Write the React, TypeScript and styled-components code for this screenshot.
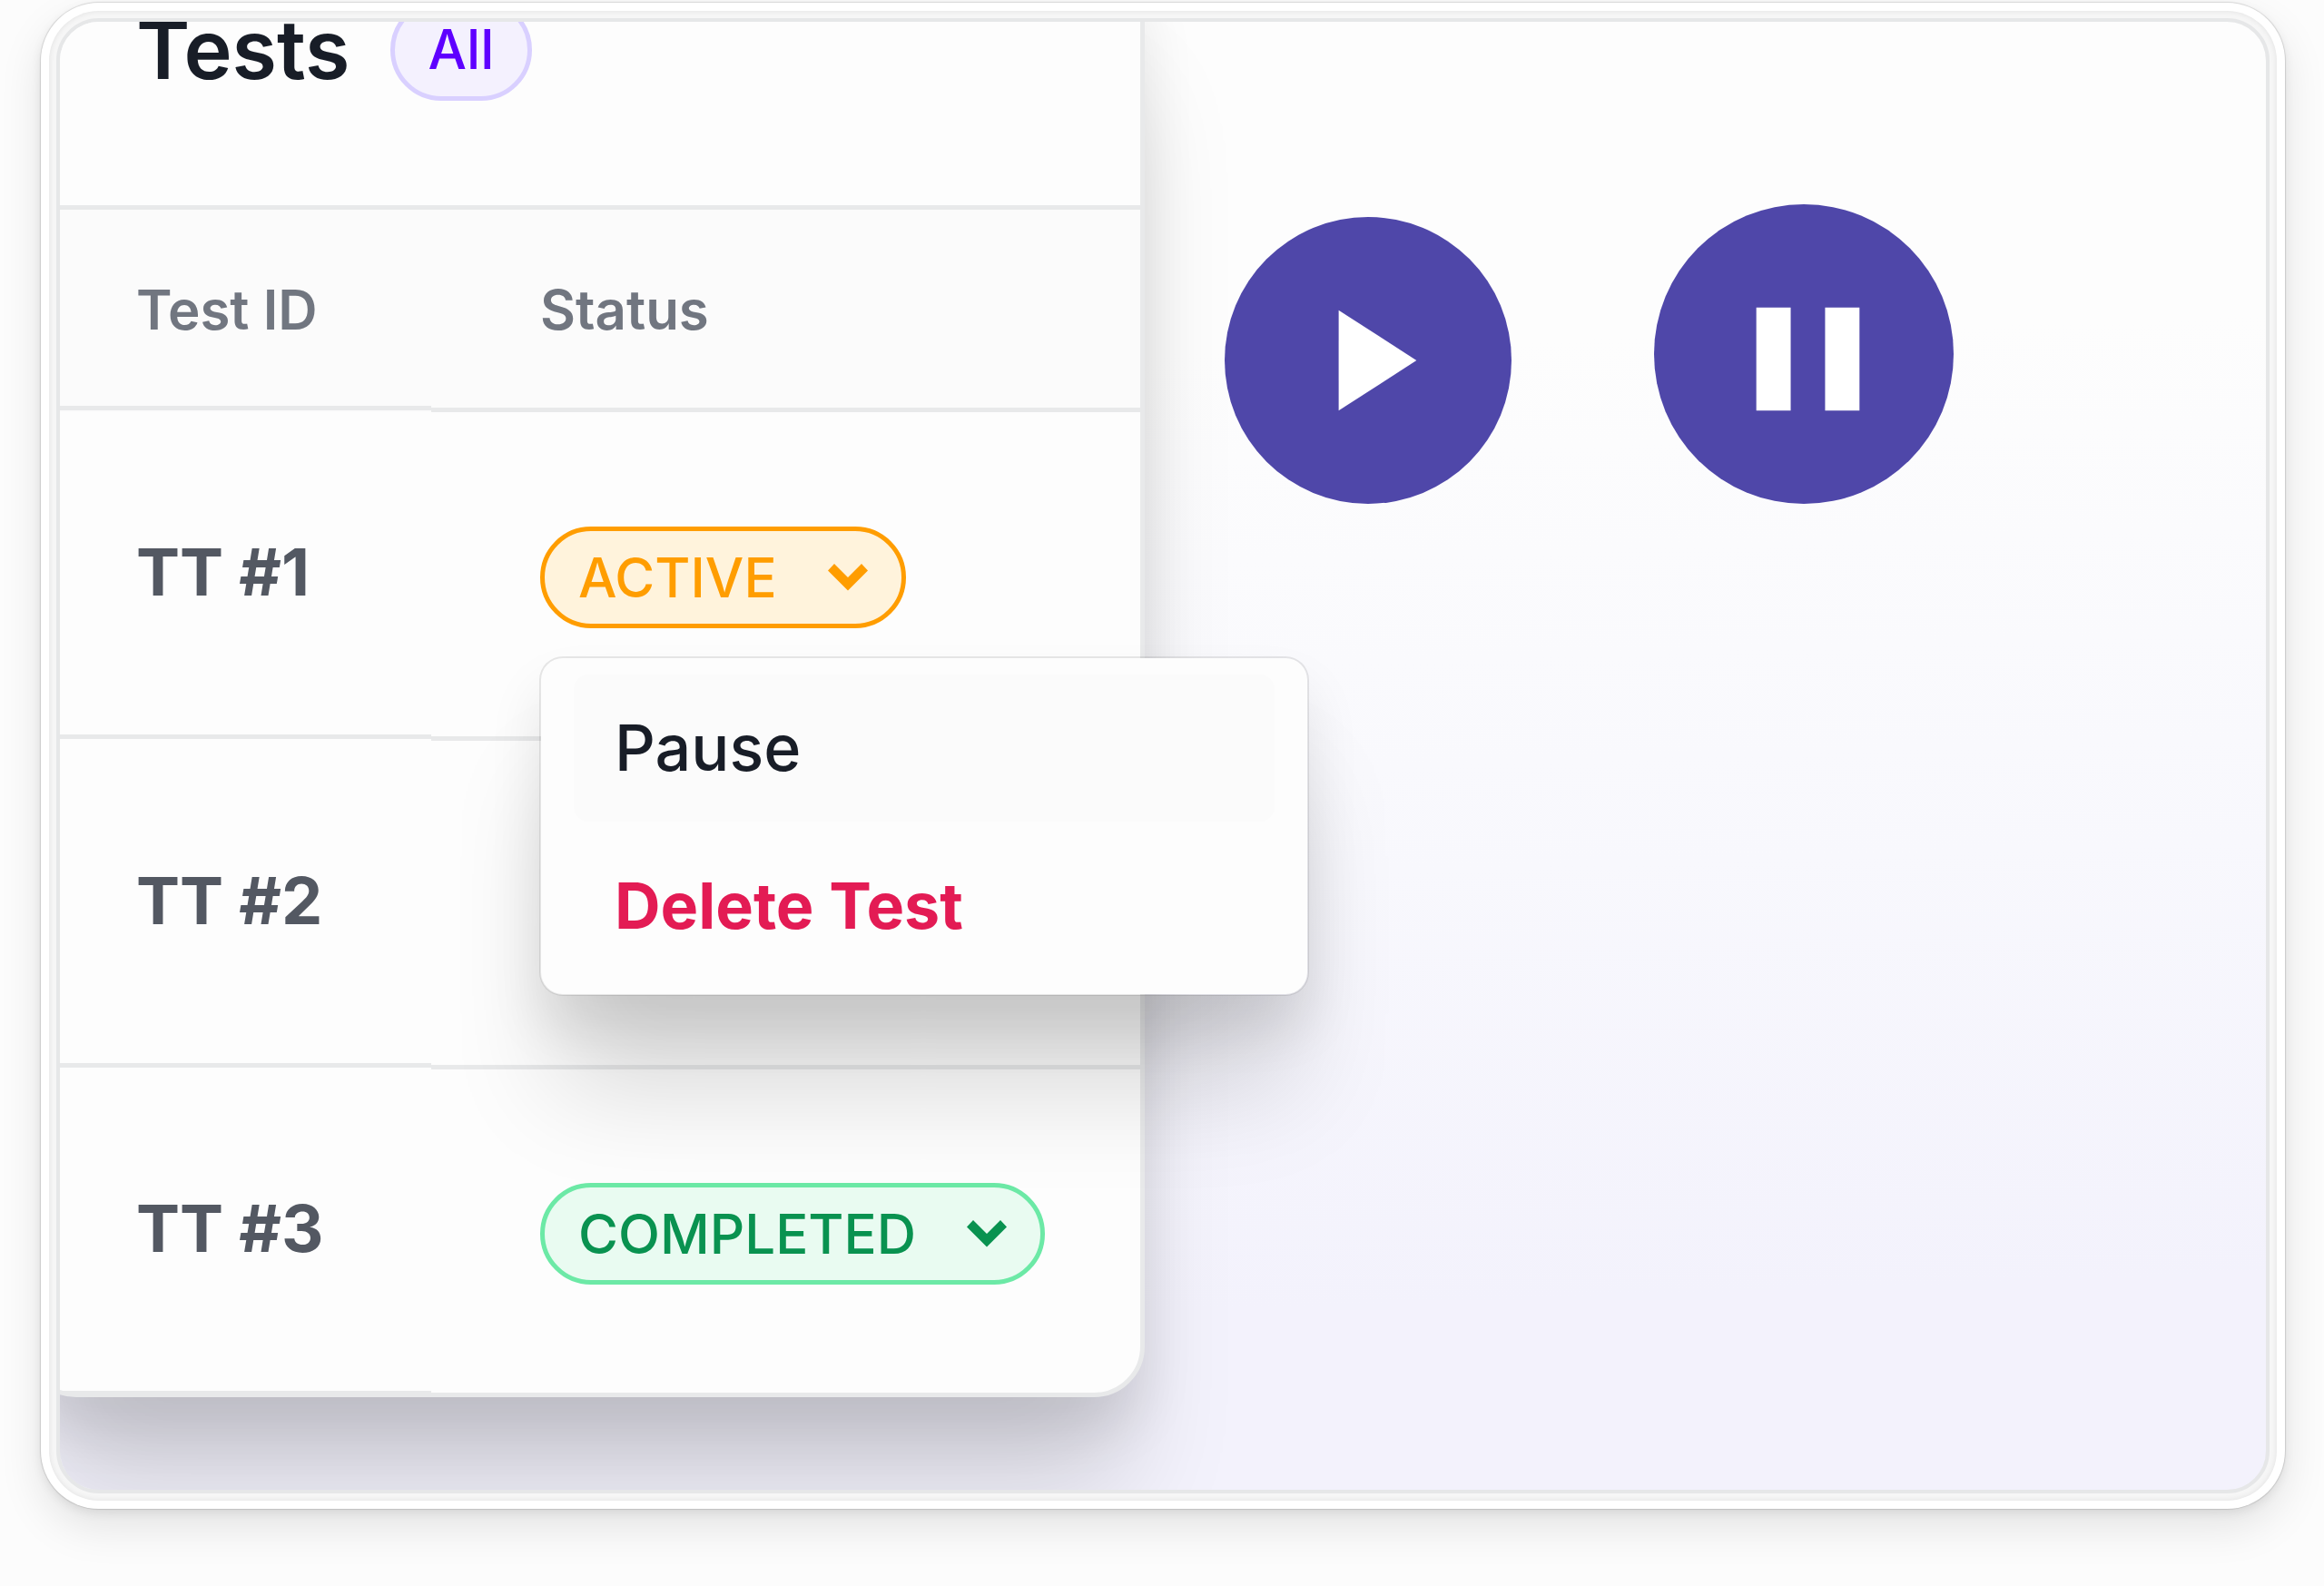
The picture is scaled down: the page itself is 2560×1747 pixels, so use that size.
import React from "react";
import styled, { createGlobalStyle, css } from "styled-components";

const GlobalStyle = createGlobalStyle`
  *, *::before, *::after { box-sizing: border-box; }
  body {
    margin: 0;
    background: #fcfcfc;
    font-family: Inter, "Liberation Sans", sans-serif;
    color: #181d27;
  }
  button { font: inherit; cursor: pointer; }
`;

const line = "#e8e9ea";
const surface = "#fdfdfd";
const elevation = css`
  box-shadow:
    0 120px 120px -20px rgba(0, 0, 0, 0.15),
    0 36px 60px 0 rgba(0, 0, 0, 0.09);
`;

const Page = styled.main`
  padding: 3px 43px 85px 45px;
`;

const Frame = styled.section`
  padding: 9px;
  border-radius: 64px;
  background: #ffffff;
  box-shadow:
    0 0 1px 1px rgba(0, 0, 0, 0.12),
    0 4px 12px rgba(0, 0, 0, 0.08),
    0 20px 48px rgba(0, 0, 0, 0.1);
`;

const Bezel = styled.div`
  padding: 8px;
  border-radius: 55px;
  background: #f6f6f6;
  box-shadow: inset 0 0 6px rgba(0, 0, 0, 0.09);
`;

const Stage = styled.div`
  display: grid;
  grid-template-columns: minmax(0, 59fr) minmax(0, 61fr);
  align-items: start;
  padding-bottom: 102px;
  border: 4px solid #e6e7e8;
  border-radius: 47px;
  overflow: hidden;
  background: linear-gradient(178deg, ${surface} 24%, #f8f8fd 58%, #f3f2fc 86%);
`;

const Card = styled.article`
  position: relative;
  z-index: 1;
  margin: -66px 0 0 -38px;
  border: 5px solid ${line};
  border-radius: 56px;
  background: ${surface};
  ${elevation}
`;

const CardHeader = styled.header`
  display: flex;
  align-items: center;
  gap: 44px;
  padding: 36px 117px 115px;
  border-bottom: 5px solid ${line};
`;

const Title = styled.h2`
  margin: 0;
  font-size: 90px;
  line-height: 112px;
  font-weight: 600;
`;

const CountPill = styled.span`
  height: 112px;
  padding: 0 37px;
  border: 5px solid #d9d0ff;
  border-radius: 56px;
  background: #f4f1fe;
  color: #5e00ff;
  font-size: 60px;
  line-height: 100px;
  font-weight: 500;
`;

const Table = styled.table`
  width: 100%;
  border-collapse: collapse;
  table-layout: fixed;
`;

const underline = (lift: number, weight = 5) => css`
  background-image: linear-gradient(
    to top,
    transparent ${lift}px,
    ${line} ${lift}px,
    ${line} ${lift + weight}px,
    transparent ${lift + weight}px
  );
`;

const HeadCell = styled.th<{ $lead?: boolean }>`
  width: ${(p) => (p.$lead ? "442px" : "auto")};
  height: 223px;
  padding: 0 0 4px ${(p) => (p.$lead ? "117px" : "120px")};
  background-color: #fbfbfb;
  ${(p) => underline(p.$lead ? 2 : 0)}
  color: #717680;
  font-size: 60px;
  line-height: 80px;
  font-weight: 600;
  text-align: left;
`;

const IdCell = styled.th`
  height: 362px;
  padding: 0 0 10px 117px;
  ${underline(2)}
  color: #535862;
  font-size: 72px;
  line-height: 96px;
  font-weight: 700;
  text-align: left;

  tr:last-child > & {
    height: 356px;
    padding-bottom: 6px;
    ${underline(0, 2)}
  }
`;

const StatusCell = styled.td`
  padding: 5px 0 4px 120px;
  ${underline(0)}

  tr:last-child > & {
    padding-bottom: 0;
    background-image: none;
  }
`;

const StatusBox = styled.div`
  position: relative;
`;

const tones = {
  active: { text: "#ff9d00", border: "#ff9d00", fill: "#fff3dc" },
  completed: { text: "#099250", border: "#6ce9a6", fill: "#e9fbf1" },
};

const StatusPill = styled.button<{ $tone: keyof typeof tones }>`
  display: flex;
  align-items: center;
  gap: 56px;
  height: 112px;
  padding: 0 37px;
  border: 5px solid ${(p) => tones[p.$tone].border};
  border-radius: 56px;
  background: ${(p) => tones[p.$tone].fill};
  color: ${(p) => tones[p.$tone].text};
  font-size: 60px;
  line-height: 80px;
  font-weight: 500;
`;

const Chevron = () => (
  <svg width="44" height="30" viewBox="0 0 44 30" aria-hidden="true">
    <path d="M7 0 22 15 37 0 44 7.500 22 29.500 0 7.500Z" fill="currentColor" />
  </svg>
);

const Menu = styled.div`
  position: absolute;
  z-index: 2;
  top: calc(100% + 31px);
  left: -1px;
  display: grid;
  gap: 12px;
  width: 848px;
  padding: 18px 36px 16px;
  border: 2px solid rgba(0, 0, 0, 0.09);
  border-radius: 26px;
  background: ${surface};
  background-clip: padding-box;
  ${elevation}
`;

const MenuItem = styled.button<{ $highlighted?: boolean; $danger?: boolean }>`
  height: 162px;
  padding: 0 45px;
  border: 0;
  border-radius: 16px;
  background: ${(p) => (p.$highlighted ? "#fbfbfb" : "transparent")};
  color: ${(p) => (p.$danger ? "#e31b54" : "#181d27")};
  font-size: 70px;
  line-height: 96px;
  font-weight: ${(p) => (p.$danger ? 700 : 500)};
  text-align: left;
`;

const Controls = styled.div`
  display: flex;
  align-items: flex-end;
  gap: 157px;
  padding: 201px 0 0 88px;
`;

const RoundButton = styled.button<{ $size: number }>`
  flex: none;
  width: ${(p) => p.$size}px;
  height: ${(p) => p.$size}px;
  padding: 0;
  border: 0;
  border-radius: 50%;
  background: #4f47a9;

  svg {
    display: block;
    width: 100%;
    height: 100%;
    fill: #ffffff;
  }
`;

export default function App() {
  return (
    <>
      <GlobalStyle />
      <Page>
        <Frame>
          <Bezel>
            <Stage>
              <Card>
                <CardHeader>
                  <Title>Tests</Title>
                  <CountPill>All</CountPill>
                </CardHeader>
                <Table>
                  <thead>
                    <tr>
                      <HeadCell $lead scope="col">Test ID</HeadCell>
                      <HeadCell scope="col">Status</HeadCell>
                    </tr>
                  </thead>
                  <tbody>
                    <tr>
                      <IdCell scope="row">TT #1</IdCell>
                      <StatusCell>
                        <StatusBox>
                          <StatusPill $tone="active" type="button" aria-haspopup="menu" aria-expanded="true">
                            ACTIVE
                            <Chevron />
                          </StatusPill>
                          <Menu role="menu">
                            <MenuItem $highlighted type="button" role="menuitem">Pause</MenuItem>
                            <MenuItem $danger type="button" role="menuitem">Delete Test</MenuItem>
                          </Menu>
                        </StatusBox>
                      </StatusCell>
                    </tr>
                    <tr>
                      <IdCell scope="row">TT #2</IdCell>
                      <StatusCell />
                    </tr>
                    <tr>
                      <IdCell scope="row">TT #3</IdCell>
                      <StatusCell>
                        <StatusPill $tone="completed" type="button" aria-haspopup="menu">
                          COMPLETED
                          <Chevron />
                        </StatusPill>
                      </StatusCell>
                    </tr>
                  </tbody>
                </Table>
              </Card>
              <Controls>
                <RoundButton $size={316} type="button" aria-label="Play">
                  <svg viewBox="0 0 317 317" aria-hidden="true">
                    <path d="M126 103 212 158.500 126 214Z" />
                  </svg>
                </RoundButton>
                <RoundButton $size={330} type="button" aria-label="Pause">
                  <svg viewBox="0 0 331 331" aria-hidden="true">
                    <path d="M113 114h38v114h-38ZM189 114h38v114h-38Z" />
                  </svg>
                </RoundButton>
              </Controls>
            </Stage>
          </Bezel>
        </Frame>
      </Page>
    </>
  );
}
